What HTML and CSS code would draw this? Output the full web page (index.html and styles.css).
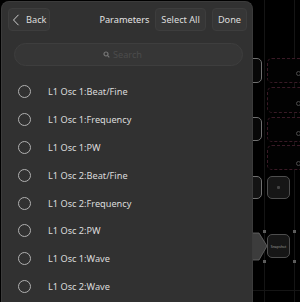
FILE: index.html
```html
<!DOCTYPE html>
<html>
<head>
<meta charset="utf-8">
<link rel="stylesheet" href="styles.css">
</head>
<body>
<div class="canvas">
  <div class="gridline v1"></div>
  <div class="gridline v2"></div>
  <div class="gridline h1"></div>
  <div class="node grey n1"></div>
  <div class="node grey n2"></div>
  <div class="node grey n3"></div>
  <div class="node dashed d1"></div>
  <div class="node dashed d2"></div>
  <div class="node dashed d3"></div>
  <div class="node dashed d4"></div>
  <div class="port p1"></div>
  <div class="port p2"></div>
  <div class="port p3"></div>
  <div class="port p4"></div>
  <div class="node box b1"><span class="dot"></span></div>
  <svg class="arrow" width="20" height="30" viewBox="0 0 20 30"><polygon points="0,1 9,1 17,14 9,28 0,28" fill="#3c3c3c" stroke="#6a6a6a" stroke-width="0.8"/></svg>
  <div class="node box b2">Snapshot</div>
  <div class="handle h-tl"></div>
  <div class="handle h-tr"></div>
  <div class="handle h-bl"></div>
  <div class="handle h-br"></div>
</div>

<div class="panel">
  <div class="header">
    <button class="btn back">
      <svg width="8" height="12" viewBox="0 0 8 12"><path d="M6.5 0.8 L1.5 6 L6.5 11.2" fill="none" stroke="#cfcfcf" stroke-width="1"/></svg>
      <span>Back</span>
    </button>
    <div class="title">Parameters</div>
    <button class="btn">Select All</button>
    <button class="btn">Done</button>
  </div>
  <div class="search">
    <svg width="7" height="7" viewBox="0 0 7 7"><circle cx="3" cy="3" r="2" fill="none" stroke="#777" stroke-width="1.2"/><path d="M4.4 4.4 L6.3 6.3" stroke="#777" stroke-width="1.2"/></svg>
    <span>Search</span>
  </div>
  <ul class="list">
    <li><span class="radio"></span>L1 Osc 1:Beat/Fine</li>
    <li><span class="radio"></span>L1 Osc 1:Frequency</li>
    <li><span class="radio"></span>L1 Osc 1:PW</li>
    <li><span class="radio"></span>L1 Osc 2:Beat/Fine</li>
    <li><span class="radio"></span>L1 Osc 2:Frequency</li>
    <li><span class="radio"></span>L1 Osc 2:PW</li>
    <li><span class="radio"></span>L1 Osc 1:Wave</li>
    <li><span class="radio"></span>L1 Osc 2:Wave</li>
  </ul>
</div>
</body>
</html>
```

FILE: styles.css
```css
html, body {
  margin: 0;
  padding: 0;
  background: #000;
  width: 300px;
  height: 302px;
  overflow: hidden;
  font-family: "Noto Sans", "Open Sans", sans-serif;
}

.canvas {
  position: absolute;
  inset: 0;
  overflow: hidden;
}

.gridline { position: absolute; background: #151515; }
.gridline.v1 { left: 264px; top: 0; width: 1px; height: 302px; }
.gridline.v2 { left: 294px; top: 0; width: 1px; height: 302px; }
.gridline.h1 { left: 250px; top: 290px; width: 50px; height: 1px; }

.node { position: absolute; box-sizing: border-box; border-radius: 5px; }
.node.grey { left: 220px; width: 42px; border: 1px solid #707070; background: #080808; }
.n1 { top: 58px; height: 25px; }
.n2 { top: 117px; height: 24px; }
.n3 { top: 176px; height: 23px; background: #141414 !important; }

.node.dashed { left: 267px; width: 50px; border: 1px dashed #3a1a26; background: #020202; }
.d1 { top: 58px; height: 25px; }
.d2 { top: 87px; height: 26px; }
.d3 { top: 117px; height: 25px; }
.d4 { top: 145px; height: 25px; }

.port { position: absolute; left: 296px; width: 5px; height: 5px; border: 1px solid #4a4a4a; border-radius: 50%; box-sizing: border-box; }
.p1 { top: 71px; }
.p2 { top: 101px; }
.p3 { top: 131px; }
.p4 { top: 161px; }

.node.box { left: 267px; width: 23px; border: 1px solid #4e4e4e; background: #161616; display: flex; align-items: center; justify-content: center; }
.b1 { top: 176px; height: 23px; }
.b2 { top: 234px; height: 24px; font-size: 3.5px; color: #9a9a9a; }
.dot { width: 3px; height: 3px; background: #444; border-radius: 1px; }

.arrow { position: absolute; left: 250px; top: 232px; }

.handle { position: absolute; width: 3px; height: 3px; background: #5c5c5c; }
.h-tl { left: 263px; top: 230px; }
.h-tr { left: 293px; top: 230px; }
.h-bl { left: 263px; top: 260px; }
.h-br { left: 293px; top: 260px; }

.panel {
  position: absolute;
  left: 1px;
  top: 1px;
  width: 252px;
  height: 301px;
  box-sizing: border-box;
  background: #313131;
  border: 1px solid #3b3b3b;
  border-bottom: none;
  border-radius: 8px 8px 0 0;
  padding: 6px 5px 0 6px;
  overflow: hidden;
}

.header {
  display: flex;
  align-items: center;
  height: 23px;
  gap: 6px;
}

.btn {
  height: 23px;
  box-sizing: border-box;
  background: #363636;
  border: 1px solid #3d3d3d;
  border-radius: 4px;
  color: #dedede;
  font-family: inherit;
  font-size: 9.2px;
  padding: 0 5px;
  display: flex;
  align-items: center;
}

.btn.back {
  width: 42px;
  gap: 6px;
  padding: 0 0 0 3px;
}

.title {
  margin-left: auto;
  font-size: 9.2px;
  color: #e4e4e4;
}

.search {
  margin: 12px 4px 0 6px;
  height: 23px;
  box-sizing: border-box;
  border-radius: 12px;
  background: #363636;
  border: 1px solid #3e3e3e;
  display: flex;
  align-items: center;
  justify-content: center;
  gap: 3px;
  padding-right: 12px;
  color: #4c4c4c;
  font-size: 9.2px;
}

.list {
  list-style: none;
  margin: 12px 0 0 0;
  padding: 0;
}

.list li {
  height: 27.8px;
  display: flex;
  align-items: center;
  color: #dcdcdc;
  font-size: 9.2px;
  padding-left: 9.5px;
}

.radio {
  width: 13px;
  height: 13px;
  box-sizing: border-box;
  border: 1px solid #b0b0b0;
  border-radius: 50%;
  margin-right: 17.5px;
}
```
